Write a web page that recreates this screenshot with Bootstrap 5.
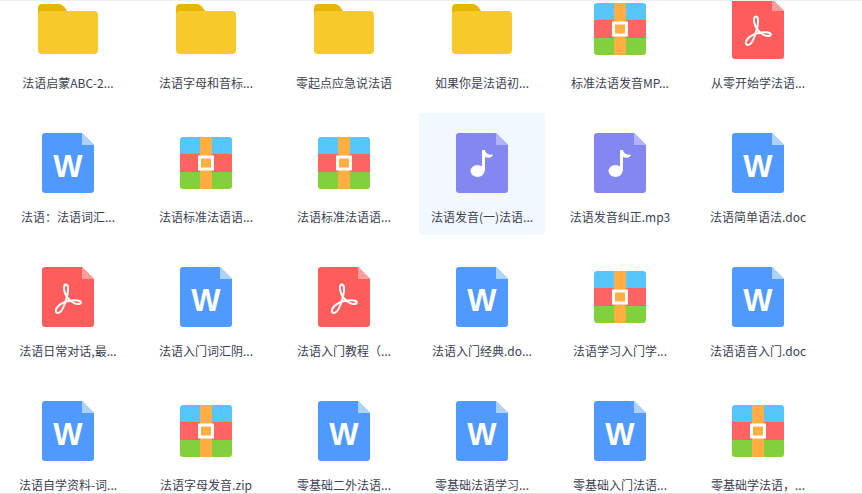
<!DOCTYPE html>
<html lang="zh-CN">
<head>
    <meta charset="UTF-8">
    <meta name="viewport" content="width=device-width, initial-scale=1.0">
    <title>文件列表</title>
    <link href="https://cdn.jsdelivr.net/npm/bootstrap@5.3.0/dist/css/bootstrap.min.css" rel="stylesheet">
    <style>
        html, body { height: 100%; background: #fff; }
        .file-pane {
            height: 494px;
            border-top: 1px solid #eeeeee;
            border-bottom: 1px solid #dfe0e8;
        }
        .file-grid {
            gap: 12px;
            margin-top: -22px;
            padding-left: 5px;
            font: 12px/20px "Noto Sans CJK SC", sans-serif;
            color: #3b4252;
        }
        .file-cell { width: 126px; height: 122px; padding-top: 20px; border-radius: 3px; }
        .file-cell.is-active { background: #f1f8ff; }
        .file-icon { height: 60px; }
        .file-icon svg { display: block; }
        .file-name { margin-top: 14px; white-space: nowrap; }
        .word-letter { font: bold 31px "Liberation Sans", sans-serif; fill: #fff; }
    </style>
</head>
<body>

<div class="file-pane overflow-hidden">
    <div class="file-grid d-flex flex-wrap" id="file-list"></div>
</div>

<script src="https://cdn.jsdelivr.net/npm/bootstrap@5.3.0/dist/js/bootstrap.bundle.min.js"></script>

<script>
    const sheet = (body, fold, inner) => `
        <svg width="52" height="60" viewBox="0 0 52 60">
            <path d="M3 0H40L52 12V57a3 3 0 0 1-3 3H3a3 3 0 0 1-3-3V3a3 3 0 0 1 3-3z" fill="${body}"/>
            <path d="M40 0L52 12H40z" fill="${fold}"/>
            ${inner}
        </svg>`;

    const icons = {
        folder: `
            <svg width="60" height="50" viewBox="0 0 60 50">
                <path d="M0 12V4a4 4 0 0 1 4-4H20c4 0 6 2 9 7v5z" fill="#e8b500"/>
                <rect y="7" width="60" height="43" rx="4" fill="#f8c92a"/>
            </svg>`,
        zip: `
            <svg width="52" height="52" viewBox="0 0 52 52">
                <clipPath id="zip-clip"><rect width="52" height="52" rx="3"/></clipPath>
                <g clip-path="url(#zip-clip)">
                    <rect width="52" height="17" fill="#55c5fb"/>
                    <rect y="17" width="52" height="18" fill="#ff6464"/>
                    <rect y="35" width="52" height="17" fill="#82d13c"/>
                    <rect x="20" width="12" height="52" fill="#ffae42"/>
                    <rect x="19.5" y="20" width="13" height="12" fill="#ffae42" stroke="#fff" stroke-width="3"/>
                </g>
            </svg>`,
        word: sheet('#4f99ff', '#add2ff', '<text class="word-letter" x="26" y="44" text-anchor="middle">W</text>'),
        pdf: sheet('#ff5c5c', '#ff9d9d', `
            <path d="M23.7 17.5C22 17.5 21.8 20 22.2 23C23 28 27 33 31 35.5C34 37.5 38.5 37.5 38.8 35.5C39 33.5 34 33 30 33.5C25 34 18.5 36.5 15.5 40C13 43 13.5 46 16 46C18.5 46 21 41.5 22.5 37.5C24.5 32 26.5 25 26 20.5C25.8 18.5 25 17.5 23.7 17.5Z"
                  fill="none" stroke="#fff" stroke-width="2"/>`),
        audio: sheet('#8487f0', '#b2b4fb', `
            <ellipse cx="21.5" cy="38" rx="7" ry="6" fill="#fff"/>
            <path d="M26 38V17H29C29.5 20 32 22.5 37 21.5C36.5 24.5 33 25.5 29 24V38z" fill="#fff"/>`)
    };

    const files = [
        ['folder', '法语启蒙ABC-2...'], ['folder', '法语字母和音标...'], ['folder', '零起点应急说法语'],
        ['folder', '如果你是法语初...'], ['zip', '标准法语发音MP...'], ['pdf', '从零开始学法语...'],
        ['word', '法语：法语词汇...'], ['zip', '法语标准法语语...'], ['zip', '法语标准法语语...'],
        ['audio', '法语发音(一)法语...', true], ['audio', '法语发音纠正.mp3'], ['word', '法语简单语法.doc'],
        ['pdf', '法语日常对话,最...'], ['word', '法语入门词汇阴...'], ['pdf', '法语入门教程（...'],
        ['word', '法语入门经典.do...'], ['zip', '法语学习入门学...'], ['word', '法语语音入门.doc'],
        ['word', '法语自学资料-词...'], ['zip', '法语字母发音.zip'], ['word', '零基础二外法语...'],
        ['word', '零基础法语学习...'], ['word', '零基础入门法语...'], ['zip', '零基础学法语，...']
    ];

    const list = document.getElementById('file-list');
    files.forEach(([type, name, active]) => {
        const cell = document.createElement('div');
        cell.classList.add('file-cell', 'd-flex', 'flex-column', 'align-items-center');
        if (active) cell.classList.add('is-active');
        cell.innerHTML = `
            <div class="file-icon d-flex align-items-center justify-content-center">${icons[type]}</div>
            <div class="file-name text-center">${name}</div>
        `;
        list.appendChild(cell);
    });
</script>

</body>
</html>
